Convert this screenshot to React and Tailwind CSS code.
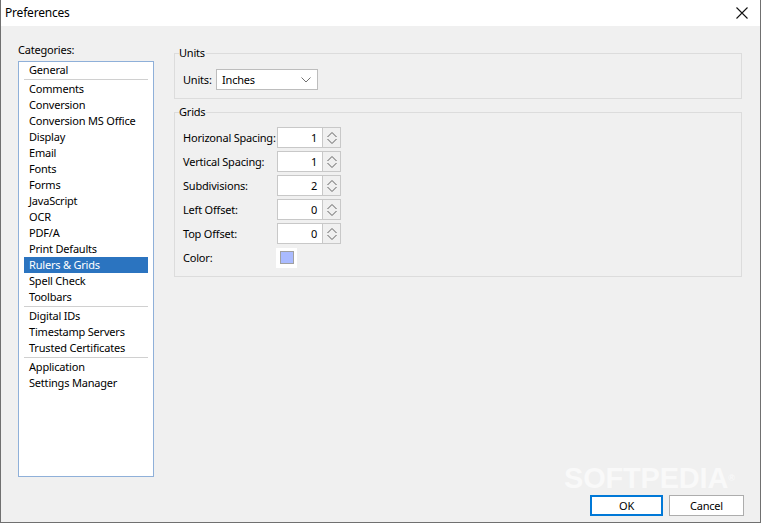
import React from "react";

const groups = [
  ["General"],
  [
    "Comments",
    "Conversion",
    "Conversion MS Office",
    "Display",
    "Email",
    "Fonts",
    "Forms",
    "JavaScript",
    "OCR",
    "PDF/A",
    "Print Defaults",
    "Rulers & Grids",
    "Spell Check",
    "Toolbars",
  ],
  ["Digital IDs", "Timestamp Servers", "Trusted Certificates"],
  ["Application", "Settings Manager"],
];

const spins = [
  ["Horizonal Spacing:", "1"],
  ["Vertical Spacing:", "1"],
  ["Subdivisions:", "2"],
  ["Left Offset:", "0"],
  ["Top Offset:", "0"],
];

function SpinArrows() {
  return (
    <svg width="12" height="14" viewBox="0 0 12 14" fill="none" stroke="#606060" strokeWidth="1">
      <path d="M1.5 6 L6 1.5 L10.5 6" />
      <path d="M1.5 8 L6 12.5 L10.5 8" />
    </svg>
  );
}

function SpinBox({ value }) {
  return (
    <div className="flex h-[21px]">
      <div className="w-[46px] h-full bg-white border border-[#c8c8c8] flex items-center justify-end pr-[5px] text-black">
        {value}
      </div>
      <div className="w-[18px] h-full border border-l-0 border-[#c8c8c8] flex items-center justify-center">
        <SpinArrows />
      </div>
    </div>
  );
}

export default function App() {
  return (
    <div
      className="relative w-[761px] h-[523px] bg-[#f0f0f0] border-x border-b border-[#707070] flex flex-col overflow-hidden text-[11px] leading-[16px] tracking-[-0.2px] text-black"
      style={{ fontFamily: '"Noto Sans", "Segoe UI", sans-serif' }}
    >
      {/* Title bar */}
      <div className="h-[26px] bg-white flex items-center justify-between pl-[4px] pr-[12px] shrink-0">
        <span className="text-[12px]">Preferences</span>
        <svg width="12" height="12" viewBox="0 0 12 12" stroke="#111" strokeWidth="1.1">
          <path d="M0.5 0.5 L11.5 11.5 M11.5 0.5 L0.5 11.5" />
        </svg>
      </div>

      <div className="flex flex-1 pl-[17px] pr-[18px]">
        {/* Left column */}
        <div className="w-[136px] pt-[16px] flex flex-col">
          <div className="h-[16px]">Categories:</div>
          <div className="mt-[3px] h-[416px] bg-white border border-[#8fb0d9] px-[5px]">
            {groups.map((g, gi) => (
              <div key={gi}>
                {gi > 0 && (
                  <div className="py-[1px]">
                    <div className="h-[1px] bg-[#d0d0d0]" />
                  </div>
                )}
                {g.map((name) => (
                  <div
                    key={name}
                    className={
                      "h-[16px] pl-[5px] whitespace-nowrap " +
                      (name === "Rulers & Grids" ? "bg-[#2b74c0] text-white" : "")
                    }
                  >
                    {name}
                  </div>
                ))}
              </div>
            ))}
          </div>
        </div>

        {/* Right column */}
        <div className="flex-1 ml-[20px] pt-[19px] flex flex-col">
          <fieldset className="border border-[#dcdcdc] pl-[8px] pr-[8px] pb-[8px]">
            <legend className="-ml-[4px] pr-[1px] leading-[16px]">Units</legend>
            <div className="mt-[8px] flex items-center h-[21px]">
              <span className="w-[33px]">Units:</span>
              <div className="w-[102px] h-[21px] bg-white border border-[#bdbdbd] flex items-center justify-between pl-[5px] pr-[6px]">
                <span>Inches</span>
                <svg width="10" height="6" viewBox="0 0 10 6" fill="none" stroke="#707070" strokeWidth="1">
                  <path d="M0.5 0.5 L5 5 L9.5 0.5" />
                </svg>
              </div>
            </div>
          </fieldset>

          <fieldset className="mt-[5px] border border-[#dcdcdc] pl-[8px] pr-[8px] pb-[8px]">
            <legend className="-ml-[4px] pr-[1px] leading-[16px]">Grids</legend>
            <div className="mt-[7px] flex flex-col gap-[3px]">
              {spins.map(([label, v]) => (
                <div key={label} className="flex items-center h-[21px]">
                  <span className="w-[94px] whitespace-nowrap">{label}</span>
                  <SpinBox value={v} />
                </div>
              ))}
              <div className="flex items-center h-[21px]">
                <span className="w-[93px]">Color:</span>
                <div className="w-[21px] h-[20px] bg-white flex items-center justify-center">
                  <div className="w-[14px] h-[13px] bg-[#aabbff] border border-[#a0a0a0]" />
                </div>
              </div>
            </div>
          </fieldset>

          <div className="flex-1" />

          <div className="flex justify-end gap-[6px] pb-[6px] -mr-[2px]">
            <button className="w-[73px] h-[21px] bg-white border-2 border-[#0078d7] flex items-center justify-center">
              OK
            </button>
            <button className="w-[75px] h-[21px] bg-white border border-[#adadad] flex items-center justify-center">
              Cancel
            </button>
          </div>
        </div>
      </div>

      {/* watermark */}
      <div
        className="absolute left-[563px] top-[462px] text-[29px] leading-[32px] font-bold text-white opacity-60 pointer-events-none whitespace-nowrap"
        style={{ fontFamily: '"Liberation Sans", Arial, sans-serif' }}
      >
        SOFTPEDIA<span className="text-[9px] align-top">®</span>
      </div>
    </div>
  );
}
